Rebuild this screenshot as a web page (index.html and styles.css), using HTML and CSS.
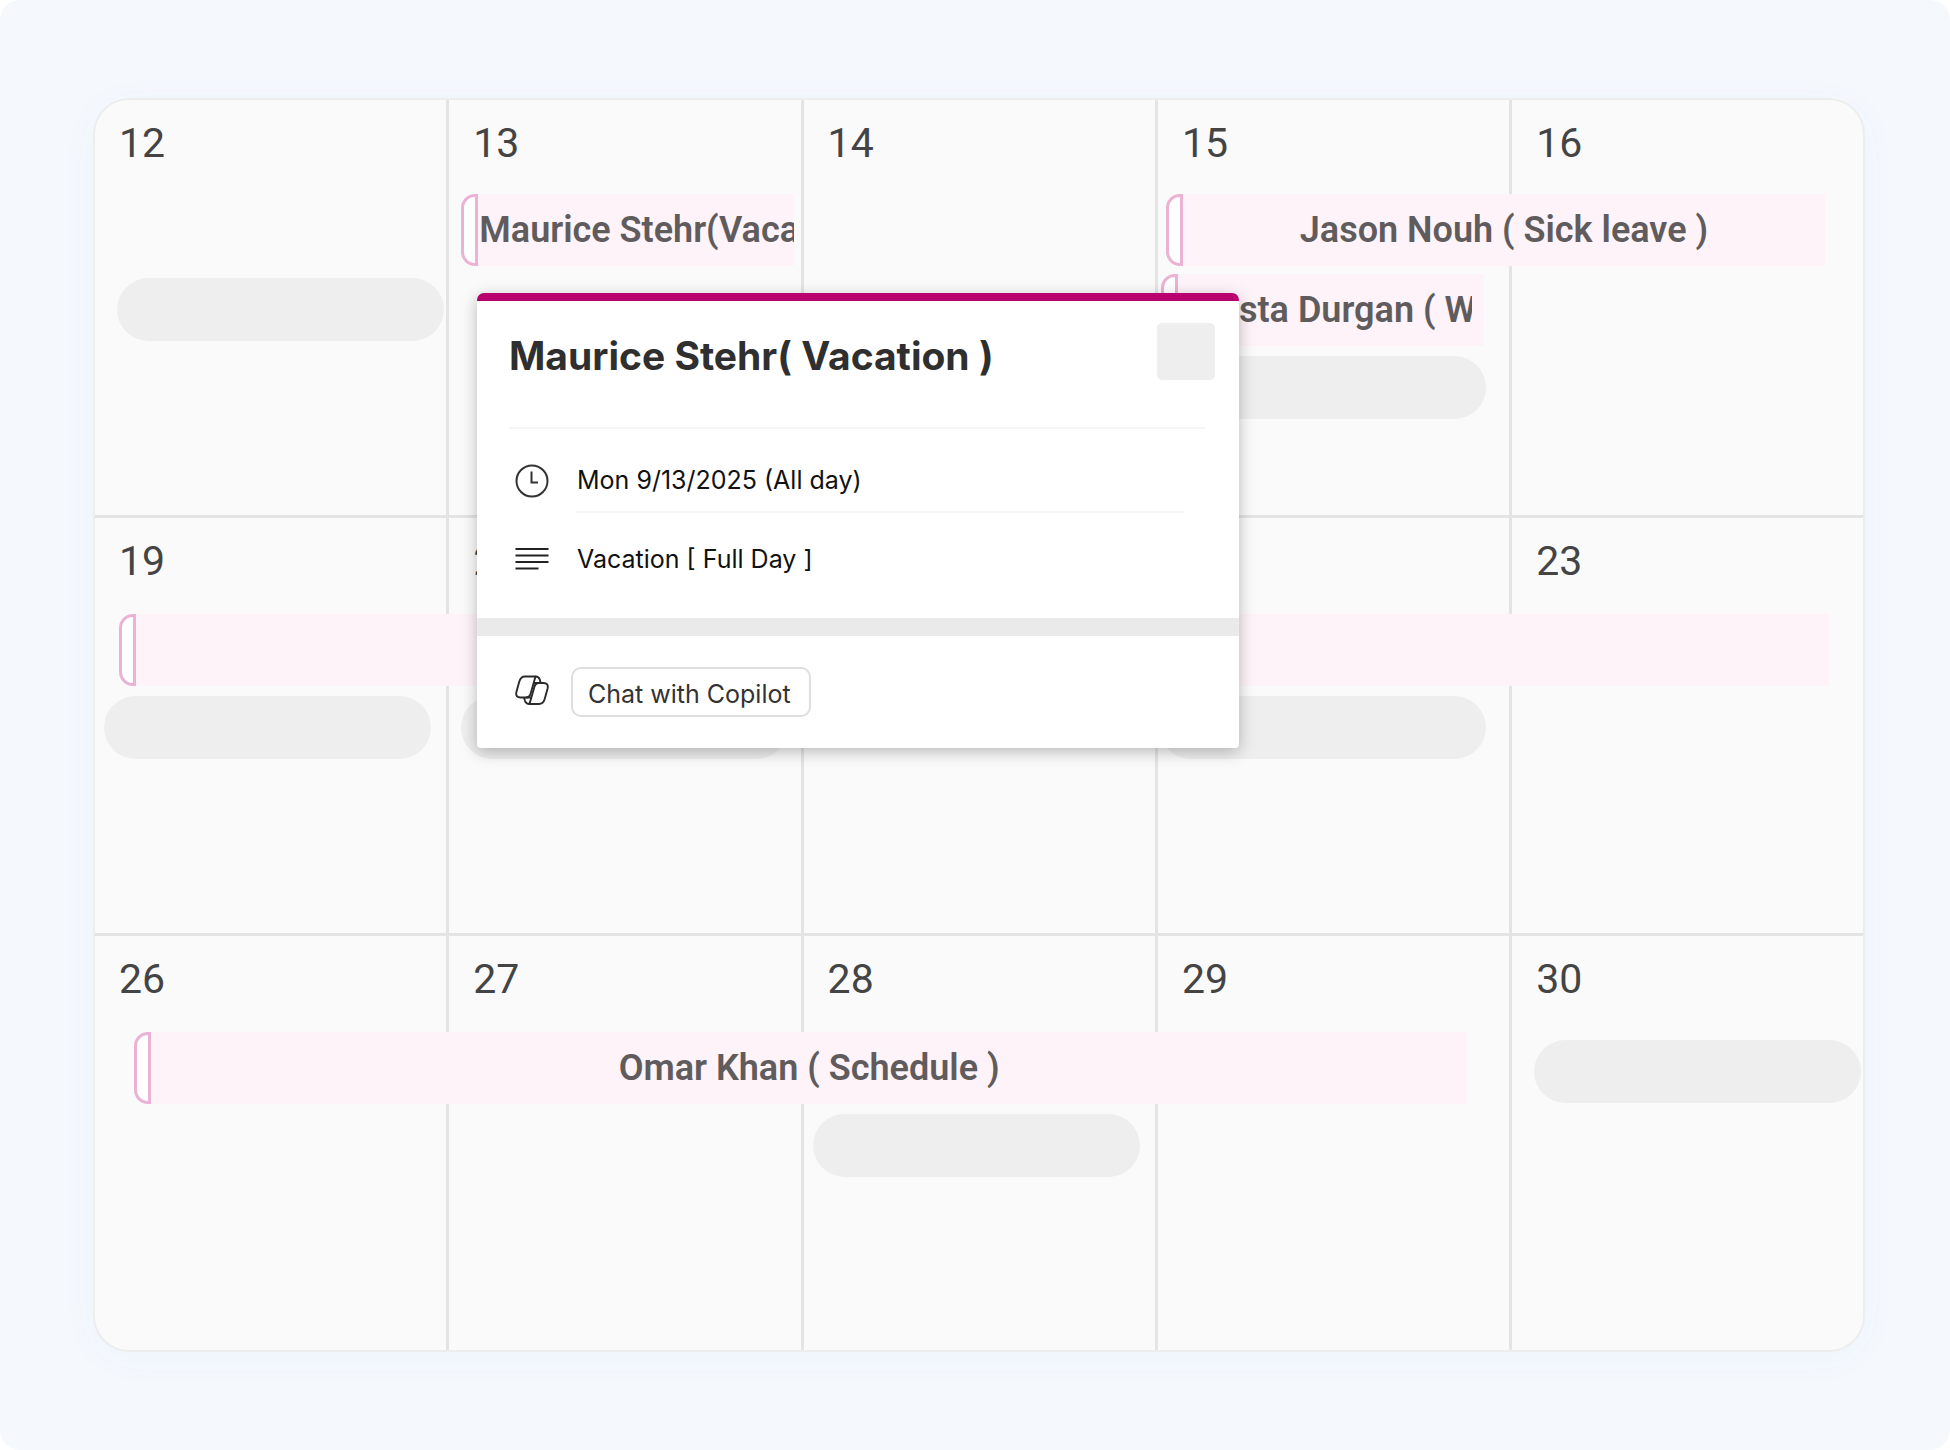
FILE: index.html
```html
<!DOCTYPE html>
<html lang="en">
<head>
    <meta charset="UTF-8">
    <meta name="viewport" content="width=device-width, initial-scale=1.0">
    <title>Team Calendar</title>
    <link rel="stylesheet" href="styles.css">
</head>
<body>
    <main class="page">
        <div class="calendar">
            <section class="week">
                <div class="day col-1">12</div>
                <div class="day col-2">13</div>
                <div class="day col-3">14</div>
                <div class="day col-4">15</div>
                <div class="day col-5">16</div>
                <div class="pill col-1 slot-2 inset-lg"></div>
                <div class="event event-vacation slot-1"><span class="handle"></span><span class="label">Maurice Stehr(Vacation)</span></div>
                <div class="event event-sick slot-1"><span class="handle"></span><span class="label">Jason Nouh ( Sick leave )</span></div>
                <div class="event event-work slot-2"><span class="handle"></span><span class="label">Krista Durgan ( Work )</span></div>
                <div class="pill col-4 slot-3"></div>
            </section>
            <section class="week">
                <div class="day col-1">19</div>
                <div class="day col-2">20</div>
                <div class="day col-3">21</div>
                <div class="day col-4">22</div>
                <div class="day col-5">23</div>
                <div class="event event-week slot-1"><span class="handle"></span><span class="label"></span></div>
                <div class="pill col-1 slot-2 inset-sm"></div>
                <div class="pill col-2 slot-2 inset-md"></div>
                <div class="pill col-4 slot-2"></div>
            </section>
            <section class="week">
                <div class="day col-1">26</div>
                <div class="day col-2">27</div>
                <div class="day col-3">28</div>
                <div class="day col-4">29</div>
                <div class="day col-5">30</div>
                <div class="event event-schedule slot-1"><span class="handle"></span><span class="label">Omar Khan ( Schedule )</span></div>
                <div class="pill col-3 slot-2 inset-sm"></div>
                <div class="pill pill-first col-5 slot-1 inset-lg"></div>
            </section>

            <div class="popup">
                <div class="popup-header">
                    <h2>Maurice Stehr( Vacation )</h2>
                    <div class="thumb"></div>
                </div>
                <div class="popup-row row-time">
                    <svg class="icon" viewBox="0 0 34 34" fill="none" stroke="#333" stroke-width="2">
                        <circle cx="17" cy="17" r="15.5"/>
                        <path d="M16.5 7.5v11h6.5"/>
                    </svg>
                    <span class="row-text">Mon 9/13/2025 (All day)</span>
                </div>
                <div class="popup-row row-note">
                    <svg class="icon" viewBox="0 0 34 34" fill="none" stroke="#222" stroke-width="2">
                        <path d="M0.5 7h33M0.5 13.5h33M0.5 20h33M0.5 26.5h23"/>
                    </svg>
                    <span class="row-text">Vacation [ Full Day ]</span>
                </div>
                <div class="popup-footer">
                    <svg class="icon icon-copilot" viewBox="0 0 34 34" fill="none" stroke="#2a2a2a" stroke-width="1.9" stroke-linejoin="round">
                        <path d="M10 3.500H20.500L15.500 21Q14.300 24.500 11 24.500H5.500Q0.300 24.500 1.400 19L4.300 8.500Q5.800 3.500 10 3.500z"/>
                        <path d="M24 31H14.500L19.500 13.500Q20.500 10 23.500 10H28.500Q33.700 10 32.600 15.500L29.700 26Q28.200 31 24 31z"/>
                        <path d="M20.500 3.500Q23.800 3.500 24.700 6.500L25.700 10M19 10H24M14.500 31Q11 31 10 28L9 24.500M11 24.500H16"/>
                    </svg>
                    <button type="button" class="copilot-btn">Chat with Copilot</button>
                </div>
            </div>
        </div>
    </main>
</body>
</html>
```
FILE: styles.css
```css
* {
    box-sizing: border-box;
}
body {
    margin: 0;
    background-color: #fff;
    font-family: Roboto, sans-serif;
}
.page {
    display: flex;
    min-height: 100vh;
    padding: 100px 87px 100px 95px;
    background-color: #f5f9fe;
    border-radius: 20px;
}
.calendar {
    position: relative;
    flex: 1;
    display: grid;
    grid-template-rows: 101fr 101fr 100fr;
    background-color: #fafafa;
    border-radius: 34px;
    box-shadow: 0 0 0 2px #ededee, 0 6px 40px rgba(60, 90, 180, 0.04);
}
.week {
    display: grid;
    grid-template-columns: repeat(4, 101fr) 100fr;
    grid-template-rows: 94px 80px 78px 1fr;
    border-bottom: 3px solid #e4e4e4;
}
.week:nth-child(3) {
    border-bottom: none;
}
.day {
    grid-row: 1 / -1;
    padding: 19px 24px;
    border-right: 3px solid #e4e4e4;
    font-size: 41px;
    line-height: 48px;
    color: #444;
}
.day.col-5 {
    border-right: none;
}
.col-1 { grid-column: 1; }
.col-2 { grid-column: 2; }
.col-3 { grid-column: 3; }
.col-4 { grid-column: 4; }
.col-5 { grid-column: 5; }
.slot-1 { grid-row: 2; }
.slot-2 { grid-row: 3; }
.slot-3 { grid-row: 4; }

/* placeholder pills */
.pill {
    width: 327px;
    height: 63px;
    margin-top: 4px;
    margin-left: 1px;
    border-radius: 32px;
    background-color: #eee;
}
.pill-first {
    margin-top: 10px;
}
.inset-sm { margin-left: 9px; }
.inset-md { margin-left: 12px; }
.inset-lg { margin-left: 22px; }

/* events */
.event {
    display: flex;
    height: 72px;
    min-width: 0;
    font-size: 36px;
    font-weight: 600;
    line-height: 72px;
    color: #605c5e;
}
.handle {
    flex: none;
    width: 17px;
    border: 3px solid #ebb2d4;
    border-radius: 14px 0 0 14px;
    background-color: #fff;
}
.label {
    flex: 1;
    min-width: 0;
    overflow: hidden;
    white-space: nowrap;
    text-align: center;
    background-color: #fdf3f8;
}
.event-vacation {
    grid-column: 2;
    margin: 0 10px 0 12px;
}
.event-vacation .label {
    padding-left: 1px;
    text-align: left;
}
.event-sick {
    grid-column: 4 / 6;
    margin: 0 38px 0 8px;
}
.event-work {
    grid-column: 4;
    margin: 0 28px 0 3px;
}
.event-work .label {
    padding-left: 16px;
    border-right: 12px solid #fdf3f8;
    text-align: left;
}
.event-week {
    grid-column: 1 / 6;
    margin: 2px 34px 0 24px;
}
.event-schedule {
    grid-column: 1 / 5;
    margin: 2px 45px 0 39px;
}

/* event popup */
.popup {
    position: absolute;
    top: 193px;
    left: 382px;
    width: 762px;
    border-top: 8px solid #b8006f;
    border-radius: 7px 7px 4px 4px;
    background-color: #fff;
    box-shadow: 0 4px 16px rgba(0, 0, 0, 0.26);
    font-family: Inter, sans-serif;
}
.popup-header {
    display: flex;
    justify-content: space-between;
    height: 128px;
    margin: 0 34px 0 32px;
    padding-top: 22px;
    border-bottom: 2px solid #f5f5f5;
}
.popup-header h2 {
    margin: 9px 0 0;
    font-size: 39px;
    line-height: 48px;
    color: #2f2f2f;
}
.thumb {
    width: 58px;
    height: 57px;
    margin-right: -10px;
    border-radius: 5px;
    background-color: #eee;
}
.popup-row {
    display: flex;
    align-items: center;
    padding-left: 38px;
    font-size: 25px;
    color: #111;
}
.icon {
    flex: none;
    width: 34px;
    height: 34px;
}
.icon-copilot {
    margin-bottom: 4px;
}
.row-text {
    flex: 1;
    margin: 0 54px 0 26px;
    padding-left: 2px;
    line-height: 62px;
}
.row-time {
    padding-top: 20px;
}
.row-time .row-text {
    border-bottom: 2px solid #f5f5f5;
}
.row-note {
    padding: 15px 0 28px 38px;
}
.popup-footer {
    display: flex;
    align-items: center;
    gap: 22px;
    padding: 31px 38px;
    border-top: 18px solid #eaeaea;
}
.copilot-btn {
    height: 50px;
    padding: 4px 18px 0 15px;
    border: 2px solid #dedede;
    border-radius: 10px;
    background-color: #fff;
    font-family: Inter, sans-serif;
    font-size: 25px;
    color: #333;
    cursor: pointer;
}
```
